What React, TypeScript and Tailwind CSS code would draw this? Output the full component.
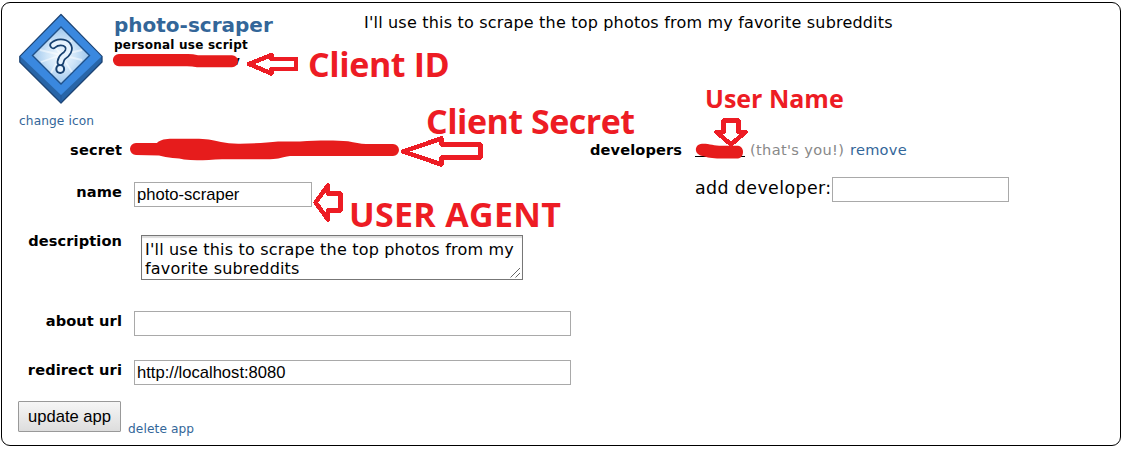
import React from "react";

const field =
  "block h-[25px] rounded-none border border-[#a9a9a9] bg-white px-[2px] font-['Liberation_Sans',sans-serif] text-[16.6px] leading-[23px] text-black outline-none";
const label = "w-[120px] shrink-0 text-right text-[14.6px] font-bold leading-[18px] tracking-[0.1px]";
const note =
  "absolute whitespace-nowrap font-['Open_Sans',sans-serif] font-bold text-[#ed1c24]";

function AppIcon() {
  return (
    <svg width="86" height="92" viewBox="18 13 86 92" className="block">
      <defs>
        <radialGradient id="glow">
          <stop offset="0" stopColor="#f4faff" />
          <stop offset="0.5" stopColor="#cfe5f8" />
          <stop offset="1" stopColor="#9cc5ec" />
        </radialGradient>
      </defs>
      <path d="M61 14.500L102 56.500V62L61 103L19.800 62V56.500Z" fill="#2865a8" stroke="#1d4474" strokeWidth="1.3" strokeLinejoin="round" />
      <path d="M61 15.500L101.500 56.500L61 95L20.500 56.500Z" fill="#3a88df" />
      <path d="M61 95V102.500" stroke="#24599a" strokeWidth="1" />
      <path d="M61 27L89.500 55.500L61 84L32.500 55.500Z" fill="url(#glow)" stroke="#1f5088" strokeWidth="1.4" />
      <g stroke="#ffffff" strokeOpacity="0.5" strokeWidth="1.800">
        <path d="M61 55L40 50M61 55L41 62M61 55L50 40M61 55L51 73M61 55L72 40M61 55L82 50M61 55L82 60M61 55L72 72" />
      </g>
      <g fill="none" strokeLinecap="round" strokeLinejoin="round">
        <path d="M53.300 45.200C57 41.800 64 41.200 67.500 45C71 49.500 67 54 63.500 56.300C61.200 58 60.800 60 60.500 62" stroke="#17406f" strokeWidth="7.800" />
        <circle cx="60.200" cy="69" r="4.900" fill="#17406f" />
        <path d="M53.300 45.200C57 41.800 64 41.200 67.500 45C71 49.500 67 54 63.500 56.300C61.200 58 60.800 60 60.500 62" stroke="#e6f2fd" strokeWidth="4.400" />
        <circle cx="60.200" cy="69" r="2.900" fill="#e6f2fd" />
      </g>
    </svg>
  );
}

function Marks() {
  return (
    <svg width="1127" height="455" viewBox="0 0 1127 455" className="pointer-events-none absolute -left-[2px] -top-[3px]">
      <g fill="#e61c1c">
        <path d="M119 54H188Q193 54 198 55.200H232A6 6 0 0 1 232 67.200H197Q192 66.300 187 66.200H119A6 6 0 0 1 119 54Z" />
        <path d="M136 143H157C160 139.500 166 138.700 172 138.700H199C209 139.200 215 140.300 221 142Q229 144 240 143.800C255 143.500 268 142.500 278 141.500H300C318 140.200 336 140.200 348 141.300C355 142.500 360 144 366 144H393A6 6 0 0 1 393 156H290C281 157 280 159 270 159.300H222C207 160 195 161 184 159.500C179 158 167 158 159 155.500L136 155A6 6 0 0 1 136 143Z" />
        <path d="M702 143.700C710 143.500 714 146 723 145.800H738C745 146.500 744.500 158 738 158.500H720C712 158.500 707 157.500 703 156C694 155 693.500 144.500 702 143.700Z" />
      </g>
      <g fill="none" stroke="#ed1c24" strokeWidth="4.500" strokeLinejoin="round" shapeRendering="crispEdges">
        <path d="M249 64L271.500 55V59H296V69H271.500V73.500Z" />
        <path d="M403 151.500L441.500 138.500V144.500H480.500V157.500H441.500V164.500Z" />
        <path d="M315.500 202.500L328 185.500V193.500H340.500V210.500H328V219.500Z" />
        <path d="M723.500 120.500H738.500V132H745.500L731 144.500L716.500 132H723.500Z" />
      </g>
    </svg>
  );
}

export default function App() {
  return (
    <div className="h-[455px] w-[1127px] overflow-hidden bg-white pl-px pt-[2px] font-['DejaVu_Sans',sans-serif] text-black">
      <div className="relative h-[444px] w-[1120px] rounded-[9px] border border-black">
        <header className="flex h-[132px] pl-[16px] pt-[10px]">
          <div className="w-[96px] shrink-0">
            <AppIcon />
            <a className="mt-[8px] block whitespace-nowrap pl-px text-[12.2px] leading-[16px] tracking-[0.1px] text-[#336699]">change icon</a>
          </div>
          <div className="w-[250px] shrink-0">
            <h2 className="text-[20px] font-bold leading-[24px] text-[#336699]">photo-scraper</h2>
            <p className="whitespace-nowrap text-[12px] font-bold leading-[17px] tracking-[0.23px]">personal use script</p>
            <p className="pl-[118px] text-[12px] font-bold leading-[15px]">v</p>
          </div>
          <p className="whitespace-nowrap text-[16px] leading-[20px] tracking-[0.19px]">I'll use this to scrape the top photos from my favorite subreddits</p>
        </header>

        <div className="flex">
          <form className="w-[570px] shrink-0">
            <div className="flex h-[44px] pt-[6px]">
              <span className={label}>secret</span>
            </div>
            <div className="flex h-[53px] gap-[12px]">
              <span className={label + " pt-[4px]"}>name</span>
              <input className={field + " mt-[3px] w-[178px]"} defaultValue="photo-scraper" />
            </div>
            <div className="flex h-[79px] gap-[19px]">
              <span className={label}>description</span>
              <div className="relative mt-[3px] h-[45px] w-[382px] border border-[#777777] pl-[3px] pt-[4px] text-[16px] leading-[19px] tracking-[0.19px] shadow-[inset_0_2px_1px_#dddddd]">
                <p className="whitespace-nowrap">I'll use this to scrape the top photos from my</p>
                <p className="whitespace-nowrap">favorite subreddits</p>
                <svg width="11" height="11" viewBox="0 0 11 11" className="absolute bottom-px right-px">
                  <path d="M0.500 10.500L10 1M5.500 10.500L10 6" stroke="#666666" fill="none" />
                </svg>
              </div>
            </div>
            <div className="flex h-[49px] gap-[12px]">
              <span className={label + " pt-px"}>about url</span>
              <input className={field + " w-[437px]"} />
            </div>
            <div className="flex h-[38px] gap-[12px]">
              <span className={label + " pt-px"}>redirect uri</span>
              <input className={field + " w-[437px]"} defaultValue="http://localhost:8080" />
            </div>
            <div className="flex pl-[16px] pt-[3px]">
              <button type="button" className="h-[31px] w-[103px] whitespace-nowrap rounded-[1px] border border-[#999999] bg-linear-to-b from-[#f6f6f6] to-[#dddddd] font-['Liberation_Sans',sans-serif] text-[16.600px] leading-[27px]">update app</button>
              <a className="ml-[7px] mt-[20px] whitespace-nowrap text-[12.2px] leading-[16px] tracking-[0.1px] text-[#336699]">delete app</a>
            </div>
          </form>

          <section className="pl-[18px]">
            <div className="flex h-[41px] pt-[6px] leading-[18px]">
              <span className="w-[105px] text-[14.6px] font-bold tracking-[0.1px]">developers</span>
              <span className="h-[16px] w-[50px] border-b border-black" />
              <span className="ml-[5px] w-[95px] whitespace-nowrap text-[14.6px] tracking-[0.33px] text-[#888888]">(that's you!)</span>
              <a className="ml-[5px] whitespace-nowrap text-[14.600px] tracking-[0.25px] text-[#336699]">remove</a>
            </div>
            <div className="flex pl-[105px]">
              <span className="w-[137px] whitespace-nowrap pt-px text-[17.4px] leading-[22px] tracking-[0.4px]">add developer:</span>
              <input className={field + " mt-px w-[177px]"} />
            </div>
          </section>
        </div>

        <Marks />
        <span className={note + " left-[306px] top-[41px] text-[34px] leading-[40px] tracking-[-0.4px]"}>Client ID</span>
        <span className={note + " left-[424px] top-[98px] text-[34px] leading-[40px] tracking-[-0.5px]"}>Client Secret</span>
        <span className={note + " left-[347px] top-[191px] text-[34px] leading-[40px] tracking-[0.3px]"}>USER AGENT</span>
        <span className={note + " left-[703px] top-[80px] text-[25px] leading-[30px]"}>User Name</span>
      </div>
    </div>
  );
}
